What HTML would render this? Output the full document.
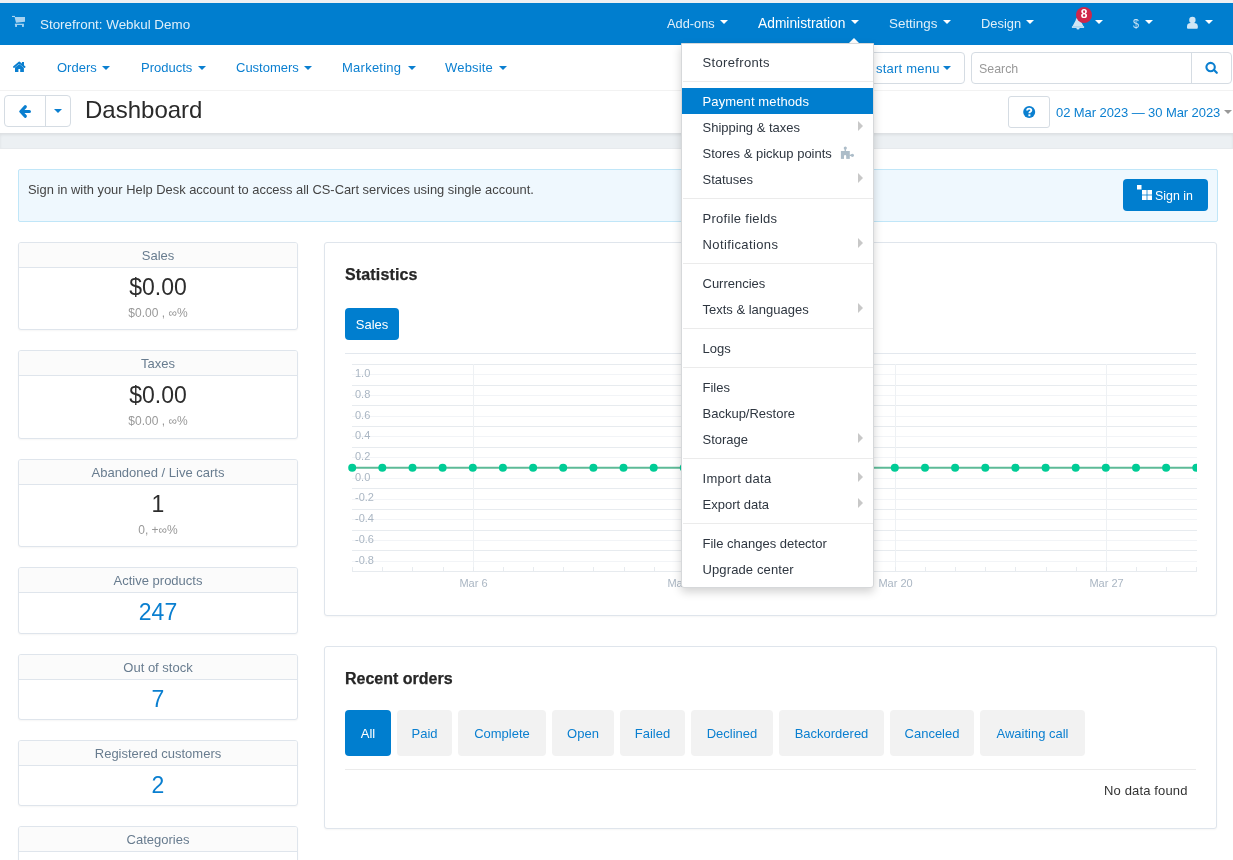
<!DOCTYPE html>
<html><head><meta charset="utf-8">
<style>
*{box-sizing:border-box;margin:0;padding:0}
html,body{width:1233px;height:860px;overflow:hidden;background:#fff;will-change:transform;font-family:"Liberation Sans",sans-serif;font-size:13px;color:#333}
.a{position:absolute;white-space:nowrap;line-height:1}
.caret{position:absolute;width:0;height:0;border-left:4px solid transparent;border-right:4px solid transparent;border-top:4px solid #fff}
.bc{border-top-color:#0a7fd0}
#topstrip{position:absolute;left:0;top:0;width:1233px;height:3px;background:#edf0f3}
#topbar{position:absolute;left:0;top:3px;width:1233px;height:42px;background:#007ecf}
#subnav{position:absolute;left:0;top:45px;width:1233px;height:46px;background:#fff;border-bottom:1px solid #f2f2f2;box-shadow:0 1px 0 #fafafa}
#titlebar{position:absolute;left:0;top:91px;width:1233px;height:42px;background:#fff}
#graystrip{position:absolute;left:0;top:133px;width:1233px;height:16px;background:#ecf0f3;box-shadow:inset 0 2px 3px rgba(0,0,0,.07);border-bottom:1px solid #e7eaed}
.tn{color:rgba(255,255,255,.88);font-size:13.5px}
.sn{color:#0a7fd0;font-size:13px}
.card{position:absolute;left:18px;width:280px;border:1px solid #dfe5ec;border-radius:3px;background:#fff;overflow:hidden;box-shadow:0 1px 2px rgba(0,0,0,.04)}
.card .h{height:25px;background:#fbfbfb;border-bottom:1px solid #dfe5ec;text-align:center;color:#687c8f;font-size:13px;line-height:25px}
.card .v{text-align:center;font-size:23px;color:#2c2c2c;line-height:1}
.card .s{text-align:center;font-size:12px;color:#999;line-height:1}
.panel{position:absolute;left:324px;width:893px;border:1px solid #dfe5ec;border-radius:3px;background:#fff;box-shadow:0 1px 2px rgba(0,0,0,.04)}
.fbtn{position:absolute;top:710px;height:46px;background:#f2f2f2;border-radius:4px;color:#0a7fd0;font-size:13px;line-height:48px;text-align:center}
#dd{position:absolute;left:681px;top:43px;width:193px;height:545px;background:#fff;border:1px solid #d6d8da;border-radius:0 0 3px 3px;box-shadow:0 4px 10px rgba(0,0,0,.18)}
.di{position:absolute;left:20.5px;font-size:13px;color:#2e3640;line-height:1;white-space:nowrap}
.dl{position:absolute;left:1px;width:190px;height:1px;background:#ebebeb}
.sa{position:absolute;left:176px;width:0;height:0;border-top:5px solid transparent;border-bottom:5px solid transparent;border-left:5px solid #c8c8c8}
</style></head><body>
<div id="topstrip"></div>
<div id="topbar"></div>
<!-- cart icon -->
<svg class="a" style="left:12px;top:15px" width="14" height="13" viewBox="0 0 14 13" fill="#a6d2f0"><rect x="0" y="0.9" width="3" height="1.1"/><path d="M2.6 2H13V6.8L4 7.8z"/><rect x="2.9" y="8.7" width="9" height="1.3"/><rect x="3.1" y="9.8" width="1.9" height="2.1"/><rect x="10" y="9.8" width="1.9" height="2.1"/></svg>
<div class="a tn" style="left:40px;top:18px;font-size:13.4px">Storefront: Webkul Demo</div>

<div class="a tn" style="left:667px;top:17.5px;font-size:12.8px">Add-ons</div><div class="caret" style="left:720px;top:20px"></div>
<div class="a tn" style="left:758px;top:16.7px;color:#fff;font-size:13.8px">Administration</div><div class="caret" style="left:851px;top:20px"></div>
<div class="a tn" style="left:889px;top:16.5px;font-size:13.4px">Settings</div><div class="caret" style="left:943px;top:20px"></div>
<div class="a tn" style="left:981px;top:17.5px;font-size:12.9px">Design</div><div class="caret" style="left:1026px;top:20px"></div>
<!-- bell -->
<svg class="a" style="left:1071px;top:17px" width="15" height="14" viewBox="0 0 15 14" fill="#cfe6f5"><path d="M7 0.5C5.6 0.5 5 1.8 4.6 3.5L1.5 9.3H12.5L9.4 3.5C9 1.8 8.4 0.5 7 0.5z"/><rect x="0.9" y="9.2" width="12.2" height="1.7"/><path d="M5.4 10.9h3.2a1.6 1.6 0 0 1-3.2 0z"/></svg>
<div class="a" style="left:1076px;top:7px;width:16px;height:16px;border-radius:8px;background:#d0264a;color:#fff;font-size:12px;font-weight:bold;text-align:center;line-height:15px">8</div>
<div class="caret" style="left:1095px;top:20px"></div>
<div class="a" style="left:1133px;top:17px;color:#cfe6f5;font-size:13.5px;transform:scaleX(0.8);transform-origin:0 0">$</div><div class="caret" style="left:1145px;top:20px"></div>
<svg class="a" style="left:1187px;top:16px" width="11" height="13" viewBox="0 0 11 13" fill="#cfe6f5"><circle cx="5.4" cy="4" r="3.2"/><path d="M0 11.8V10.2C0 8.2 1.6 7 3.6 7H7.2C9.2 7 10.8 8.2 10.8 10.2V11.8a1 1 0 0 1-1 1H1a1 1 0 0 1-1-1z"/></svg>
<div class="caret" style="left:1205px;top:20px"></div>

<div id="subnav"></div>
<!-- home icon -->
<svg class="a" style="left:13px;top:61px" width="13" height="12" viewBox="0 0 13 12"><path d="M0.9 6L6.25 1.5 11.6 6" fill="none" stroke="#0a7fd0" stroke-width="1.7" stroke-linecap="round" stroke-linejoin="round"/><rect x="8.9" y="1" width="2.1" height="3.8" fill="#0a7fd0"/><path d="M2 6.6L6.25 3.1 10.9 6.8V11H7.2V8H5.4V11H2z" fill="#0a7fd0"/></svg>
<div class="a sn" style="left:57px;top:61px">Orders</div><div class="caret bc" style="left:102px;top:66px"></div>
<div class="a sn" style="left:141px;top:61px">Products</div><div class="caret bc" style="left:198px;top:66px"></div>
<div class="a sn" style="left:236px;top:61px">Customers</div><div class="caret bc" style="left:304px;top:66px"></div>
<div class="a sn" style="left:342px;top:61px;letter-spacing:0.25px">Marketing</div><div class="caret bc" style="left:408px;top:66px"></div>
<div class="a sn" style="left:445px;top:61px;letter-spacing:0.18px">Website</div><div class="caret bc" style="left:499px;top:66px"></div>
<!-- start menu btn -->
<div class="a" style="left:820px;top:52px;width:145px;height:32px;border:1px solid #d5dce3;border-radius:4px;background:#fff"></div>
<div class="a sn" style="left:876px;top:62px;letter-spacing:0.22px">start menu</div><div class="caret bc" style="left:943px;top:66px"></div>
<!-- search -->
<div class="a" style="left:971px;top:52px;width:261px;height:32px;border:1px solid #d5dce3;border-radius:4px;background:#fff"></div>
<div class="a" style="left:1191px;top:53px;width:1px;height:30px;background:#d5dce3"></div>
<div class="a" style="left:979px;top:62.5px;color:#999;font-size:12.4px">Search</div>
<svg class="a" style="left:1205px;top:61px" width="14" height="14" viewBox="0 0 14 14"><circle cx="5.6" cy="6.1" r="4.2" fill="none" stroke="#0a7fd0" stroke-width="2.1"/><path d="M9 9l2.8 2.8" stroke="#0a7fd0" stroke-width="2.2" stroke-linecap="round"/></svg>

<div id="titlebar"></div>
<div id="graystrip"></div>
<!-- back btn group -->
<div class="a" style="left:4px;top:95px;width:67px;height:32px;border:1px solid #d5dce3;border-radius:4px;background:#fff"></div>
<div class="a" style="left:45px;top:96px;width:1px;height:30px;background:#d5dce3"></div>
<svg class="a" style="left:18.5px;top:105px" width="13" height="13" viewBox="0 0 13 13"><path d="M6.2 1.8L1.9 6.5l4.3 4.7" fill="none" stroke="#0a7fd0" stroke-width="3.2" stroke-linejoin="round" stroke-linecap="round"/><path d="M2.5 6.5h7.9" stroke="#0a7fd0" stroke-width="3.2" stroke-linecap="round"/></svg>
<div class="caret bc" style="left:54px;top:109px"></div>
<div class="a" style="left:85px;top:98px;font-size:24px;color:#2a2a2a">Dashboard</div>
<!-- help -->
<div class="a" style="left:1008px;top:96px;width:42px;height:32px;border:1px solid #d5dce3;border-radius:3px;background:#fff"></div>
<svg class="a" style="left:1023px;top:106px" width="12.5" height="12" viewBox="0 0 12.5 12"><circle cx="6.2" cy="6" r="6" fill="#0a7fd0"/><path d="M4.1 4.6C4.1 3.3 5 2.6 6.2 2.6S8.3 3.3 8.3 4.4C8.3 5.6 6.6 5.8 6.4 6.9V7.3" fill="none" stroke="#fff" stroke-width="1.9" stroke-linecap="butt"/><rect x="5.4" y="8.3" width="2" height="1.9" fill="#fff"/></svg>
<div class="a sn" style="left:1056px;top:105.5px;letter-spacing:-0.08px">02 Mar 2023 — 30 Mar 2023</div>
<div class="caret" style="left:1224px;top:110px;border-top-color:#999"></div>

<!-- info -->
<div class="a" style="left:18px;top:169px;width:1200px;height:53px;background:#eff8fe;border:1px solid #c0e6f8;border-radius:2px"></div>
<div class="a" style="left:28px;top:184px;color:#444;font-size:12.9px">Sign in with your Help Desk account to access all CS-Cart services using single account.</div>
<div class="a" style="left:1123px;top:179px;width:85px;height:32px;background:#007ecf;border-radius:4px"></div>
<svg class="a" style="left:1137px;top:185px" width="16" height="16" viewBox="0 0 16 16"><rect x="0" y="0" width="4.5" height="4.5" fill="#fff"/><rect x="5" y="5" width="4.6" height="4.6" fill="#fff"/><rect x="10.4" y="5" width="4.6" height="4.6" fill="#fff"/><rect x="5" y="10.4" width="4.6" height="4.6" fill="#fff"/><rect x="10.4" y="10.4" width="4.6" height="4.6" fill="#fff"/></svg>
<div class="a" style="left:1155px;top:189.5px;color:#fff;font-size:12.4px">Sign in</div>

<!-- left cards -->
<div class="card" style="top:242px;height:88px"><div class="h">Sales</div><div class="v" style="margin-top:8px">$0.00</div><div class="s" style="margin-top:8px">$0.00 , ∞%</div></div>
<div class="card" style="top:350px;height:89px"><div class="h">Taxes</div><div class="v" style="margin-top:8px">$0.00</div><div class="s" style="margin-top:8px">$0.00 , ∞%</div></div>
<div class="card" style="top:459px;height:88px"><div class="h">Abandoned / Live carts</div><div class="v" style="margin-top:8px">1</div><div class="s" style="margin-top:8px">0, +∞%</div></div>
<div class="card" style="top:567px;height:67px"><div class="h">Active products</div><div class="v" style="margin-top:8px;color:#0a7fd0">247</div></div>
<div class="card" style="top:654px;height:66px"><div class="h">Out of stock</div><div class="v" style="margin-top:8px;color:#0a7fd0">7</div></div>
<div class="card" style="top:740px;height:66px"><div class="h">Registered customers</div><div class="v" style="margin-top:8px;color:#0a7fd0">2</div></div>
<div class="card" style="top:826px;height:60px"><div class="h">Categories</div></div>

<!-- statistics panel -->
<div class="panel" style="top:242px;height:374px"></div>
<div class="a" style="left:345px;top:267px;font-size:16px;font-weight:bold;color:#262626;-webkit-text-stroke:0.25px #262626;letter-spacing:0.15px">Statistics</div>
<div class="a" style="left:345px;top:308px;width:54px;height:32px;background:#007ecf;border-radius:4px;color:#fff;font-size:13px;text-align:center;line-height:33px">Sales</div>
<div class="a" style="left:345px;top:353px;width:851px;height:1px;background:#e3e8ee"></div>
<svg id="chart" class="a" style="left:340px;top:355px" width="857" height="240"><rect x="12" y="19" width="845" height="1" fill="#f2f4f7"/><rect x="12" y="40" width="845" height="1" fill="#f2f4f7"/><rect x="12" y="61" width="845" height="1" fill="#f2f4f7"/><rect x="12" y="81" width="845" height="1" fill="#f2f4f7"/><rect x="12" y="102" width="845" height="1" fill="#f2f4f7"/><rect x="12" y="123" width="845" height="1" fill="#f2f4f7"/><rect x="12" y="144" width="845" height="1" fill="#f2f4f7"/><rect x="12" y="164" width="845" height="1" fill="#f2f4f7"/><rect x="12" y="185" width="845" height="1" fill="#f2f4f7"/><rect x="12" y="206" width="845" height="1" fill="#f2f4f7"/><rect x="12" y="9" width="845" height="1" fill="#e7ebef"/><rect x="12" y="30" width="845" height="1" fill="#e7ebef"/><rect x="12" y="50" width="845" height="1" fill="#e7ebef"/><rect x="12" y="71" width="845" height="1" fill="#e7ebef"/><rect x="12" y="92" width="845" height="1" fill="#e7ebef"/><rect x="12" y="112" width="845" height="1" fill="#e7ebef"/><rect x="12" y="133" width="845" height="1" fill="#e7ebef"/><rect x="12" y="154" width="845" height="1" fill="#e7ebef"/><rect x="12" y="175" width="845" height="1" fill="#e7ebef"/><rect x="12" y="195" width="845" height="1" fill="#e7ebef"/><rect x="12" y="216" width="845" height="1" fill="#e7ebef"/><rect x="133" y="9" width="1" height="207" fill="#eef1f4"/><rect x="344" y="9" width="1" height="207" fill="#eef1f4"/><rect x="555" y="9" width="1" height="207" fill="#eef1f4"/><rect x="766" y="9" width="1" height="207" fill="#eef1f4"/><rect x="12" y="212" width="1" height="4" fill="#e7ebef"/><rect x="42" y="212" width="1" height="4" fill="#e7ebef"/><rect x="72" y="212" width="1" height="4" fill="#e7ebef"/><rect x="103" y="212" width="1" height="4" fill="#e7ebef"/><rect x="133" y="212" width="1" height="4" fill="#e7ebef"/><rect x="163" y="212" width="1" height="4" fill="#e7ebef"/><rect x="193" y="212" width="1" height="4" fill="#e7ebef"/><rect x="223" y="212" width="1" height="4" fill="#e7ebef"/><rect x="253" y="212" width="1" height="4" fill="#e7ebef"/><rect x="284" y="212" width="1" height="4" fill="#e7ebef"/><rect x="314" y="212" width="1" height="4" fill="#e7ebef"/><rect x="344" y="212" width="1" height="4" fill="#e7ebef"/><rect x="374" y="212" width="1" height="4" fill="#e7ebef"/><rect x="404" y="212" width="1" height="4" fill="#e7ebef"/><rect x="434" y="212" width="1" height="4" fill="#e7ebef"/><rect x="464" y="212" width="1" height="4" fill="#e7ebef"/><rect x="495" y="212" width="1" height="4" fill="#e7ebef"/><rect x="525" y="212" width="1" height="4" fill="#e7ebef"/><rect x="555" y="212" width="1" height="4" fill="#e7ebef"/><rect x="585" y="212" width="1" height="4" fill="#e7ebef"/><rect x="615" y="212" width="1" height="4" fill="#e7ebef"/><rect x="645" y="212" width="1" height="4" fill="#e7ebef"/><rect x="675" y="212" width="1" height="4" fill="#e7ebef"/><rect x="706" y="212" width="1" height="4" fill="#e7ebef"/><rect x="736" y="212" width="1" height="4" fill="#e7ebef"/><rect x="766" y="212" width="1" height="4" fill="#e7ebef"/><rect x="796" y="212" width="1" height="4" fill="#e7ebef"/><rect x="826" y="212" width="1" height="4" fill="#e7ebef"/><rect x="856" y="212" width="1" height="4" fill="#e7ebef"/><text x="15.0" y="22.2" font-family="Liberation Sans" font-size="11" fill="#aab6c3">1.0</text><text x="15.0" y="42.9" font-family="Liberation Sans" font-size="11" fill="#aab6c3">0.8</text><text x="15.0" y="63.6" font-family="Liberation Sans" font-size="11" fill="#aab6c3">0.6</text><text x="15.0" y="84.3" font-family="Liberation Sans" font-size="11" fill="#aab6c3">0.4</text><text x="15.0" y="105.0" font-family="Liberation Sans" font-size="11" fill="#aab6c3">0.2</text><text x="15.0" y="125.7" font-family="Liberation Sans" font-size="11" fill="#aab6c3">0.0</text><text x="15.0" y="146.4" font-family="Liberation Sans" font-size="11" fill="#aab6c3">-0.2</text><text x="15.0" y="167.1" font-family="Liberation Sans" font-size="11" fill="#aab6c3">-0.4</text><text x="15.0" y="187.8" font-family="Liberation Sans" font-size="11" fill="#aab6c3">-0.6</text><text x="15.0" y="208.5" font-family="Liberation Sans" font-size="11" fill="#aab6c3">-0.8</text><text x="133.5" y="232.0" font-family="Liberation Sans" font-size="11" fill="#aab6c3" text-anchor="middle">Mar 6</text><text x="344.5" y="232.0" font-family="Liberation Sans" font-size="11" fill="#aab6c3" text-anchor="middle">Mar 13</text><text x="555.5" y="232.0" font-family="Liberation Sans" font-size="11" fill="#aab6c3" text-anchor="middle">Mar 20</text><text x="766.5" y="232.0" font-family="Liberation Sans" font-size="11" fill="#aab6c3" text-anchor="middle">Mar 27</text><line x1="12.0" x2="857.0" y1="112.8" y2="112.8" stroke="#5dba97" stroke-width="2"/><circle cx="12.2" cy="112.8" r="4" fill="#00cc96"/><circle cx="42.3" cy="112.8" r="4" fill="#00cc96"/><circle cx="72.5" cy="112.8" r="4" fill="#00cc96"/><circle cx="102.6" cy="112.8" r="4" fill="#00cc96"/><circle cx="132.8" cy="112.8" r="4" fill="#00cc96"/><circle cx="162.9" cy="112.8" r="4" fill="#00cc96"/><circle cx="193.1" cy="112.8" r="4" fill="#00cc96"/><circle cx="223.2" cy="112.8" r="4" fill="#00cc96"/><circle cx="253.4" cy="112.8" r="4" fill="#00cc96"/><circle cx="283.5" cy="112.8" r="4" fill="#00cc96"/><circle cx="313.7" cy="112.8" r="4" fill="#00cc96"/><circle cx="343.8" cy="112.8" r="4" fill="#00cc96"/><circle cx="374.0" cy="112.8" r="4" fill="#00cc96"/><circle cx="404.1" cy="112.8" r="4" fill="#00cc96"/><circle cx="434.2" cy="112.8" r="4" fill="#00cc96"/><circle cx="464.4" cy="112.8" r="4" fill="#00cc96"/><circle cx="494.5" cy="112.8" r="4" fill="#00cc96"/><circle cx="524.7" cy="112.8" r="4" fill="#00cc96"/><circle cx="554.8" cy="112.8" r="4" fill="#00cc96"/><circle cx="585.0" cy="112.8" r="4" fill="#00cc96"/><circle cx="615.1" cy="112.8" r="4" fill="#00cc96"/><circle cx="645.3" cy="112.8" r="4" fill="#00cc96"/><circle cx="675.4" cy="112.8" r="4" fill="#00cc96"/><circle cx="705.6" cy="112.8" r="4" fill="#00cc96"/><circle cx="735.7" cy="112.8" r="4" fill="#00cc96"/><circle cx="765.8" cy="112.8" r="4" fill="#00cc96"/><circle cx="796.0" cy="112.8" r="4" fill="#00cc96"/><circle cx="826.1" cy="112.8" r="4" fill="#00cc96"/><circle cx="856.3" cy="112.8" r="4" fill="#00cc96"/></svg>

<!-- recent orders -->
<div class="panel" style="top:646px;height:183px"></div>
<div class="a" style="left:345px;top:671px;font-size:16px;font-weight:bold;color:#262626;-webkit-text-stroke:0.25px #262626">Recent orders</div>
<div class="fbtn" style="left:345px;width:46px;background:#007ecf;color:#fff">All</div>
<div class="fbtn" style="left:397px;width:55px">Paid</div>
<div class="fbtn" style="left:458px;width:88px">Complete</div>
<div class="fbtn" style="left:552px;width:62px">Open</div>
<div class="fbtn" style="left:620px;width:65px">Failed</div>
<div class="fbtn" style="left:691px;width:82px">Declined</div>
<div class="fbtn" style="left:779px;width:105px">Backordered</div>
<div class="fbtn" style="left:890px;width:84px">Canceled</div>
<div class="fbtn" style="left:980px;width:105px">Awaiting call</div>
<div class="a" style="left:345px;top:769px;width:851px;height:1px;background:#ebebeb"></div>
<div class="a" style="left:1104px;top:783.5px;color:#333;font-size:13px;letter-spacing:0.15px">No data found</div>

<!-- dropdown -->
<svg class="a" style="left:847px;top:37px" width="14" height="8" viewBox="0 0 14 8"><path d="M0.5 7.5L7 1l6.5 6.5z" fill="#fff"/></svg>
<div id="dd">
<div class="di" style="top:12px;letter-spacing:0.35px">Storefronts</div>
<div class="dl" style="top:37px"></div>
<div class="a" style="left:0;top:44px;width:191px;height:26px;background:#007ecf"></div>
<div class="di" style="top:51px;letter-spacing:0.12px;color:#fff">Payment methods</div>
<div class="di" style="top:77px">Shipping &amp; taxes</div><div class="sa" style="top:77px"></div>
<div class="di" style="top:103px">Stores &amp; pickup points</div><svg class="a" style="left:158.3px;top:101.5px" width="15" height="14" viewBox="0 0 15 14"><rect x="0.9" y="5" width="8.9" height="7.9" fill="#adbdc9"/><circle cx="5.3" cy="2.1" r="1.6" fill="#adbdc9"/><rect x="4.6" y="2.5" width="1.4" height="3" fill="#adbdc9"/><circle cx="12.4" cy="9.3" r="1.6" fill="#adbdc9"/><rect x="9.5" y="8.6" width="2.5" height="1.4" fill="#adbdc9"/><path d="M4 13V10a1.1 1.1 0 0 1 2.2 0V13z" fill="#fff"/></svg>
<div class="di" style="top:129px">Statuses</div><div class="sa" style="top:129px"></div>
<div class="dl" style="top:154px"></div>
<div class="di" style="top:168px;letter-spacing:0.29px">Profile fields</div>
<div class="di" style="top:194px;letter-spacing:0.39px">Notifications</div><div class="sa" style="top:194px"></div>
<div class="dl" style="top:219px"></div>
<div class="di" style="top:233px">Currencies</div>
<div class="di" style="top:259px">Texts &amp; languages</div><div class="sa" style="top:259px"></div>
<div class="dl" style="top:284px"></div>
<div class="di" style="top:298px">Logs</div>
<div class="dl" style="top:323px"></div>
<div class="di" style="top:337px">Files</div>
<div class="di" style="top:363px">Backup/Restore</div>
<div class="di" style="top:389px">Storage</div><div class="sa" style="top:389px"></div>
<div class="dl" style="top:414px"></div>
<div class="di" style="top:428px;letter-spacing:0.29px">Import data</div><div class="sa" style="top:428px"></div>
<div class="di" style="top:454px">Export data</div><div class="sa" style="top:454px"></div>
<div class="dl" style="top:479px"></div>
<div class="di" style="top:493px">File changes detector</div>
<div class="di" style="top:519px;letter-spacing:0.12px">Upgrade center</div>
</div>
</body></html>
